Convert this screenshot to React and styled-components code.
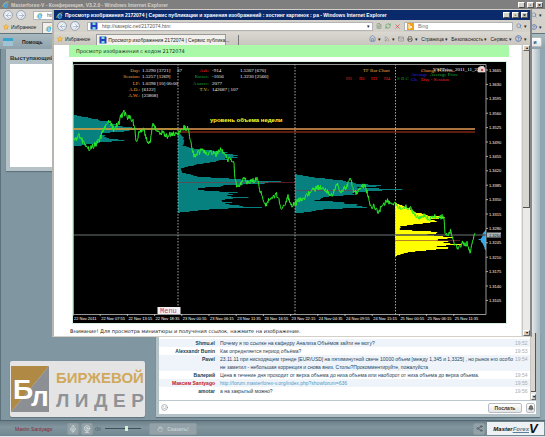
import React from "react";
import styled, { createGlobalStyle } from "styled-components";
import {
  ArrowLeft, ArrowRight, Star, FileText, RefreshCw, X, Search, House, Rss,
  Mail, Printer, CircleHelp, Mic, Webcam, Share2, Bell, Hand, Volume2, Smile,
} from "lucide-react";

const GlobalStyle = createGlobalStyle`
  * { box-sizing: border-box; }
  body { margin: 0; font-family: "Liberation Sans", Arial, sans-serif; font-size: 5px; line-height: 8px; }
  button, input { font: inherit; color: inherit; padding: 0; margin: 0; border: 0; background: none; }
  a { text-decoration: none; }
  svg { flex: none; }
`;

/* ---------- browser chrome ---------- */

const Desktop = styled.div`
  position: relative;
  display: flex;
  flex-direction: column;
  min-height: 100vh;
  overflow: hidden;
  background: #7a929c;
`;

const TitleBar = styled.div`
  display: flex;
  align-items: center;
  gap: 2px;
  height: ${(p) => (p.$active ? 10 : 9)}px;
  padding: 0 2px;
  background: ${(p) => (p.$active ? "#0b2a6b" : "#7f7f7f")};
  color: ${(p) => (p.$active ? "#fff" : "#d4d0c8")};
  font-weight: bold;
  white-space: nowrap;

  h1 {
    flex: 1;
    margin: 0;
    overflow: hidden;
    font-size: 5px;
    font-weight: bold;
  }
`;

const WinButton = styled.button`
  width: 7px;
  height: 6px;
  border: 1px solid;
  border-color: #fff #555 #555 #fff;
  background: #d4d0c8;
  color: #000;
  line-height: 4px;
  font-weight: bold;
`;

const Toolbar = styled.div`
  display: flex;
  align-items: center;
  gap: 3px;
  height: ${(p) => (p.$tall ? 13 : 12)}px;
  padding: 0 3px;
  background: ${(p) => (p.$tall ? "linear-gradient(#dbd8d2, #c9c6bf)" : "#d4d1ca")};
  color: #222;
  white-space: nowrap;
`;

const RoundButton = styled.button`
  display: grid;
  place-items: center;
  width: 10px;
  height: 10px;
  border: 1px solid #9aa7b8;
  border-radius: 50%;
  background: radial-gradient(#fff, #ccd6e2);
  color: #8496ad;
`;

const Address = styled.div`
  display: flex;
  flex: 1;
  align-items: center;
  gap: 4px;
  height: 9px;
  margin-left: 4px;
  padding: 0 2px;
  border: 1px solid #b4b4b4;
  background: #fff;
`;

const SearchBox = styled(Address)`
  flex: 0 0 109px;
  margin-left: 0;
`;

const Field = styled.input`
  flex: 1;
  min-width: 0;
  height: 7px;
  outline: none;
  color: #555;
`;

const ToolButton = styled.button`
  display: flex;
  align-items: center;
  gap: 2px;
  color: #222;
`;

const Tab = styled.button`
  display: flex;
  align-items: center;
  align-self: flex-end;
  gap: 1px;
  width: 130px;
  height: 11px;
  margin-left: 3px;
  padding: 0 2px;
  border: 1px solid #999;
  border-bottom: 0;
  background: #f1f0ed;
`;

const SmallTab = styled.button`
  align-self: flex-end;
  width: 10px;
  height: 10px;
  border-right: 1px solid #777;
`;

const Spacer = styled.div`
  flex: 1;
`;

/* ---------- conference page ---------- */

const AppHeader = styled.header`
  display: flex;
  align-items: center;
  justify-content: space-between;
  gap: 10px;
  height: 16px;
  padding: 0 3px;
  border-top: 1px solid #65747b;
  background: linear-gradient(#a9b9c0, #8fa2ab);
  color: #203039;
  font-weight: bold;
`;

const HeaderGroup = styled.div`
  display: flex;
  align-items: center;
  gap: 9px;
`;

const Brand = styled.div`
  width: 10px;
  border-top: 3px dashed #3aa3cc;
  border-bottom: 5px solid #9fc3d3;
`;

const Stage = styled.main`
  display: grid;
  flex: 1;
  grid-template-columns: 140px 1fr;
  grid-template-rows: 1fr auto;
  column-gap: 10px;
  padding: 0 5px 3px;
  border-left: 1px solid #5d717b;
  background: linear-gradient(90deg, #8097a2, #7e96a1 90%, #91a7b2);
`;

const Speakers = styled.section`
  align-self: start;
  padding: 4px;
  background: #b4c1c7;
  box-shadow: 0 1px 1px #60747e;

  h2 {
    margin: 0;
    font-size: 6px;
    line-height: 11px;
    color: #26363e;
  }
`;

const SpeakerList = styled.div`
  height: 103px;
  background: #fff;
`;

const Board = styled.section`
  background: linear-gradient(90deg, #d5dadd 95%, #e2e6e8 98%, #a8bac3);
`;

const Sponsor = styled.a`
  display: flex;
  align-self: end;
  gap: 7px;
  height: 56px;
  margin: 0 5px 0 4px;
  padding: 5px 1px;
  width: 135px;
  border-radius: 2px;
  background: #e4e4e5;
  box-shadow: 0 1px 1px #60747e;
`;

const SponsorWords = styled.div`
  flex: 1;
  font-weight: bold;
`;

const SponsorLine = styled.div`
  display: flex;
  justify-content: space-between;
  color: ${(p) => p.$color};
  font-size: ${(p) => p.$size}px;
  line-height: 23px;
`;

const Chat = styled.section`
  height: 84px;
  padding: 0 4px 3px 3px;
  display: flex;
  flex-direction: column;
  background: #b4c1c7;
  box-shadow: 0 1px 1px #60747e;
`;

const Log = styled.div`
  display: flex;
  flex: 1;
  min-height: 0;
  background: #fff;
`;

const Messages = styled.table`
  flex: 1;
  align-self: flex-end;
  margin-bottom: 5px;
  table-layout: fixed;
  border-collapse: collapse;
  color: #25435a;

  td, th { padding: 0; line-height: 8px; vertical-align: top; }
  th {
    width: 61px;
    padding-right: 5px;
    text-align: right;
  }
  td:last-child { width: 15px; color: #a7adb0; }
  a { color: #4a9cc9; }
`;

const MessageRow = styled.tr`
  background: ${(p) => (p.$shade ? "#eef4fa" : "#fff")};
  th { color: ${(p) => (p.$own ? "#c0142c" : "#1c4050")}; }
`;

const ScrollBar = styled.div`
  display: flex;
  flex-direction: column;
  justify-content: space-between;
  width: ${(p) => p.$width}px;
  background: #eceae6;
  border-left: 1px solid #c8c6c2;
`;

const ScrollButton = styled.button`
  width: 100%;
  height: 6px;
  border: 1px solid;
  border-color: #fff #666 #666 #fff;
  background: #d4d0c8;
  color: #000;
  font-size: 4px;
  line-height: 4px;
`;

const Thumb = styled.div`
  flex: 0 0 ${(p) => p.$size};
  margin-bottom: auto;
  border-right: 1px solid #555;
  border-bottom: 1px solid #555;
  background: #d9d6d0;
`;

const Composer = styled.form`
  display: flex;
  align-items: center;
  gap: 4px;
  height: 14px;
  padding: 0 1px 0 2px;
  border-top: 1px solid #bcc8ce;
  background: #fff;
  color: #7a8890;
`;

const PanelButton = styled.button`
  display: flex;
  align-items: center;
  justify-content: center;
  gap: 4px;
  width: ${(p) => p.$width}px;
  height: ${(p) => (p.$dark ? 12 : 10)}px;
  border: 1px solid ${(p) => (p.$dark ? "#8b999f" : "#b9bdc0")};
  border-radius: 2px;
  background: ${(p) => (p.$dark ? "#93a2a8" : "linear-gradient(#fff, #e3e5e6)")};
  color: ${(p) => (p.$dark ? "#c4ced2" : "#333")};
  font-weight: bold;
`;

const Footer = styled.footer`
  display: flex;
  align-items: center;
  gap: 2px;
  height: 17px;
  padding: 0 1px 0 15px;
  border-top: 1px solid #53656f;
  border-bottom: 1px solid #dfe5e8;
  background: linear-gradient(#6b7f89, #8296a0 40%, #71868f);
`;

const UserName = styled.span`
  width: 50px;
  color: #8c2433;
`;

const Volume = styled.input`
  width: 36px;
  height: 6px;
  margin: 0 6px 0 2px;
  appearance: none;

  &::-webkit-slider-runnable-track { height: 1px; background: #3f5059; }
  &::-webkit-slider-thumb {
    appearance: none;
    width: 3px;
    height: 5px;
    margin-top: -2px;
    background: #d3f0d4;
  }
`;

const Product = styled.a`
  display: flex;
  align-items: center;
  justify-content: center;
  width: 57px;
  height: 13px;
  background: #eef1f3;
  color: #111;
  font-size: 6px;
  font-style: italic;
  font-weight: bold;

  span { color: #58809a; text-decoration: underline; }
  strong { font-size: 13px; line-height: 13px; }
`;

/* ---------- picture window ---------- */

const Popup = styled.section`
  position: absolute;
  top: 9px;
  left: 52px;
  right: 13px;
  border: 1px solid #d4d0c8;
  border-right: 2px solid #85878a;
  border-left: 2px solid #b8b6b0;
  background: #fff;
`;

const Viewport = styled.div`
  display: flex;
`;

const Page = styled.div`
  flex: 1;
  min-width: 0;
  padding: 0 12px 0 15px;
  border-right: 1px solid #dceee8;
`;

const PageTitle = styled.h2`
  margin: 0 0 5px;
  padding-left: 7px;
  background: #a9f9a9;
  color: #17301a;
  font: 5px/12px "DejaVu Sans", sans-serif;
`;

const PictureLink = styled.a`
  display: block;
  margin: 0 3px 0 4px;
  outline: 1px solid #d8f0e0;
`;

const Chart = styled.svg`
  display: block;
  width: 100%;
  height: auto;
  background: #000;
  font-family: "Liberation Sans", sans-serif;
  font-size: 4px;

  .serif { font-family: "Liberation Serif", serif; font-size: 5px; }
`;

const Notice = styled.p`
  margin: 4px 0 0 1px;
  color: #222;
  font: 5px/9px "DejaVu Sans", sans-serif;
`;

/* anchors of the price line, x then y */
const price = [
  [73, 140], [76, 139], [79, 136], [82, 140], [85, 146], [88, 149], [92, 147], [96, 144], [100, 139],
  [103, 131], [106, 126], [109, 120], [111, 125], [114, 130], [117, 125], [119, 122], [121, 116],
  [124, 113], [127, 117], [130, 116], [133, 122], [135, 128], [136, 143], [139, 133], [143, 129],
  [146, 137], [149, 143], [151, 138], [153, 122], [155, 127], [158, 132], [163, 133], [167, 136],
  [172, 134], [177, 134], [180, 130], [184, 128], [188, 129], [190, 139], [193, 153], [195, 156],
  [199, 152], [203, 150], [206, 153], [211, 152], [216, 154], [220, 150], [224, 153], [228, 160],
  [230, 156], [234, 164], [235, 178], [237, 187], [241, 184], [244, 178], [248, 183], [253, 181],
  [257, 178], [260, 192], [263, 197], [266, 206], [269, 200], [273, 198], [276, 194], [279, 200],
  [281, 211], [284, 206], [288, 196], [291, 205], [294, 205], [299, 200], [305, 197], [311, 191],
  [317, 188], [322, 187], [327, 192], [332, 195], [337, 183], [341, 192], [347, 186], [350, 177],
  [354, 192], [358, 193], [361, 186], [365, 186], [368, 195], [371, 207], [374, 206], [378, 211],
  [382, 208], [387, 200], [392, 206], [396, 203], [400, 209], [405, 207], [411, 209], [415, 215],
  [420, 217], [425, 216], [430, 219], [434, 217], [440, 217], [444, 217], [445, 231], [448, 236],
  [451, 231], [454, 242], [458, 250], [462, 243], [467, 244], [470, 252], [472, 242], [475, 231],
];

/* volume profiles: rows of [y, length] */
const profiles = [
  { x: 73, color: "#078080", rows: [[115, 4], [118, 20], [121, 34], [124, 40], [126, 50], [128, 66], [130, 58], [132, 36], [134, 26], [136, 32], [139, 42], [140, 48], [142, 28], [145, 8]] },
  { x: 178, color: "#078080", rows: [[133, 2], [138, 6], [145, 5], [148, 15], [151, 42], [156, 58], [160, 40], [163, 24], [166, 10], [168, 3], [172, 4], [176, 20], [179, 60], [181, 106], [183, 80], [185, 50], [188, 20], [190, 24], [192, 54], [195, 48], [197, 64], [200, 40], [204, 58], [207, 78], [209, 28], [212, 2]] },
  { x: 295, color: "#078080", rows: [[174, 2], [177, 18], [179, 38], [182, 56], [185, 82], [187, 70], [189, 98], [191, 66], [194, 54], [197, 28], [200, 20], [202, 48], [205, 60], [207, 72], [209, 30], [212, 8]] },
  { x: 395, color: "#ffff00", rows: [[203, 2], [207, 12], [212, 22], [214, 30], [217, 46], [219, 38], [221, 42], [223, 28], [226, 6], [229, 5], [232, 46], [234, 30], [237, 52], [239, 42], [242, 54], [244, 62], [246, 46], [248, 54], [250, 30], [252, 12], [255, 2]] },
  { x: 486, color: "#38a8e8", dir: -1, rows: [[230, 1], [233, 3], [237, 4], [239, 7], [242, 4], [246, 2], [249, 1]] },
];

const noise = (n) => {
  const v = Math.sin(n * 12.9898) * 43758.5453;
  return (v - Math.floor(v)) * 2 - 1;
};

const between = (list, at) => {
  const i = Math.max(1, list.findIndex((p) => p[0] >= at));
  const [a, b] = [list[i - 1], list[i]];
  return a[1] + ((b[1] - a[1]) * (at - a[0])) / (b[0] - a[0]);
};

const pricePoints = () => {
  const out = [];
  for (let x = 73; x <= 475; x += 0.5) {
    out.push(`${x},${(between(price, x) + noise(x) * 2.8).toFixed(1)}`);
  }
  return out.join(" ");
};

const profilePath = ({ x, rows, dir = 1 }) => {
  const first = rows[0][0];
  const last = rows[rows.length - 1][0];
  let d = `M${x} ${first}`;
  for (let y = first; y <= last; y++) {
    const len = between(rows, y) * (1 + noise(y + x) * 0.12);
    d += `H${(x + dir * len).toFixed(1)}V${y + 1}`;
  }
  return `${d}H${x}Z`;
};

const prices = Array.from({ length: 17 }, (_, i) => (1.3665 - i * 0.0035).toFixed(4));

const times = [
  "22 Nov 2011", "22 Nov 07:55", "22 Nov 13:15", "22 Nov 18:35", "23 Nov 00:55",
  "23 Nov 06:15", "23 Nov 11:35", "23 Nov 16:55", "23 Nov 22:15", "24 Nov 04:35",
  "24 Nov 09:55", "24 Nov 15:15", "25 Nov 00:55", "25 Nov 06:15", "25 Nov 11:35",
];

const stats = [
  ["Day:", "1.5290 [3721]"],
  ["Session:", "1.5257 [1269]"],
  ["LP:", "1.0398 [10] 00:00"],
  ["A.D.:", "[6122]"],
  ["A.W.:", "[23808]"],
];

const deltas = [
  ["Ask:", "-914", "#ff2020", "1.5307 [670]"],
  ["Канал:", "-1056", "#189838", "1.3230 [2566]"],
  ["Азиатс:", "2077", "#189838", ""],
  ["T.V.:", "142687 | 107", "#f0c838", ""],
];

const ForexChart = () => (
  <Chart viewBox="73 62 433 261" role="img" aria-label="уровень объема недели">
    {profiles.map((p) => (
      <path key={p.x} d={profilePath(p)} fill={p.color} />
    ))}
    <path d="M178 182.500H295M295 190.500H360M395 240.500H460" stroke="#8c3040" strokeWidth="0.6" />
    <path d="M73 235H486" stroke="#4a4e4e" strokeWidth="1.300" />
    <path d="M73 129H475" stroke="#e39a55" strokeWidth="1.400" />
    <path d="M73 129H178" stroke="#b8a032" strokeWidth="1" />
    <path d="M178 132H475" stroke="#7d2612" strokeWidth="1.400" />
    <path d="M178 64V314M295 64V314M395.500 64V314" stroke="#b8b8b8" strokeWidth="0.9" strokeDasharray="1.500 1.500" />
    <polyline points={pricePoints()} fill="none" stroke="#28ee28" strokeWidth="1" />
    <path d="M73.500 64.500H486V314.500H73.500Z" fill="none" stroke="#a8a8a8" strokeWidth="0.9" />

    {prices.map((label, i) => (
      <g key={label}>
        <path d={`M486 ${70 + i * 14.4}h2`} stroke="#ccc" strokeWidth="0.8" />
        <text x="489" y={71.5 + i * 14.4} fill="#fff">{label}</text>
      </g>
    ))}
    <rect x="487" y="232.500" width="14" height="5" fill="#aeb4b4" />
    <text x="489" y="236.500" fill="#111">1.3264</text>
    {times.map((label, i) => (
      <g key={label}>
        <path d={`M${73 + i * 27.2} 314v2`} stroke="#ccc" strokeWidth="0.8" />
        <text x={74 + i * 27.2} y="320" fill="#fff">{label}</text>
      </g>
    ))}

    <g className="serif">
      {stats.map(([name, value], i) => (
        <g key={name}>
          <text x="140" y={72 + i * 6.3} textAnchor="end" fill="#ffa040">{name}</text>
          <text x="142" y={72 + i * 6.3} fill="#eee">{value}</text>
        </g>
      ))}
      <text x="177" y="72" fill="#eee">37</text>
      {deltas.map(([name, value, color, extra], i) => (
        <g key={name}>
          <text x="209" y={72 + i * 6.3} textAnchor="end" fill={color}>{name}</text>
          <text x="212" y={72 + i * 6.3} fill="#eee">{value}</text>
          <text x="240" y={72 + i * 6.3} fill="#eee">{extra}</text>
        </g>
      ))}
      <text x="363" y="72" fill="#ffa040">TF Bar Chart</text>
      <g fill="#ff2020">
        <text x="346" y="80">H1</text>
        <text x="359" y="80">ID</text>
        <text x="371" y="80">H3</text>
        <text x="384" y="80">H4</text>
      </g>
      <text x="397" y="80" fill="#189838">S B C</text>
      <text x="411" y="76" fill="#2828e8">Average</text>
      <text x="411" y="81" fill="#2828e8">Ch.</text>
      <text x="430" y="76" fill="#18a838">Average Price</text>
      <text x="421" y="81" fill="#ff2020">Day - Session</text>
      <text x="421" y="72" fill="#ffa040">Change Percent</text>
      <text x="433" y="71" fill="#fff">VSPPrice_2011_11_22</text>
    </g>
    <path d="M479 67h5l1 2v3h-7v-3zM480 66l2 1 2-1" fill="#e8c8c8" stroke="#eee" strokeWidth="0.6" />
    <circle cx="482" cy="70" r="1" fill="#b02020" />

    <text x="210" y="122" fill="#ffff28" fontSize="6" fontWeight="bold">уровень объема недели</text>
    <rect x="157.500" y="307" width="23" height="7" fill="#f4f0f2" />
    <text x="160" y="313" fill="#b84878" fontSize="7" fontFamily="Liberation Mono, monospace">Menu</text>
  </Chart>
);

const WindowButtons = () => (
  <>
    <WinButton aria-label="Свернуть">_</WinButton>
    <WinButton aria-label="Развернуть">▫</WinButton>
    <WinButton aria-label="Закрыть">×</WinButton>
  </>
);

const IeMark = () => (
  <svg width="7" height="7" viewBox="0 0 14 14" fill="none">
    <path d="M11.500 8H4a3.500 3.500 0 0 0 7 1.500M4 7a3.500 3.500 0 0 1 7.500 1" stroke="#3fb0ef" strokeWidth="2.200" />
    <path d="M2 12C0 9 7 1 13 2" stroke="#f2c53c" strokeWidth="1.300" />
  </svg>
);

const SiteMark = () => (
  <svg width="8" height="8" viewBox="0 0 16 16">
    <path d="M1 1h13l1 2v12H1z" fill="#2440c0" />
    <path d="M5 1h6v5H5zM5 10h6v5H5z" fill="#7fe0d0" />
  </svg>
);

const Navigation = () => (
  <>
    <RoundButton aria-label="Назад"><ArrowLeft size={7} /></RoundButton>
    <RoundButton aria-label="Вперед"><ArrowRight size={7} /></RoundButton>
  </>
);

const Favorites = () => (
  <ToolButton><Star size={6} color="#e0912a" fill="#f7c948" /> Избранное</ToolButton>
);

const SponsorMark = () => (
  <svg width="38" height="46" viewBox="0 0 38 46">
    <path d="M0 0H38L0 46Z" fill="#b08a45" />
    <path d="M38 0V46H0Z" fill="#8c8f94" />
    <g fill="#fff" fontWeight="bold">
      <text x="2" y="33" fontSize="28">Б</text>
      <text x="20" y="40" fontSize="28">л</text>
    </g>
  </svg>
);

const messages = [
  { name: "Shmu.el", text: "Почему я по ссылке на кафедру Анализа Объёмов зайти не могу?", time: "19:52", shade: true },
  { name: "Alexxandr Bunin", text: "Как определяется период объёма?", time: "19:53" },
  { name: "Pavel", text: "23.11.11 при нисходящем тренде [EUR/USD] на пятиминутной свече 10000 объем [между 1,345 и 1,3325] , но рынок его особо не заметил - небольшая коррекция и снова вниз. Столы?Прокомментируйте, пожалуйста", time: "19:54", shade: true },
  { name: "Валерий", text: "Цена в течение дня проходит от верха объема до низа объема или наоборот от низа объема до верха объема.", time: "19:54" },
  { name: "Максим Santyago", link: "http://forum.masterforex-v.org/index.php?showforum=636", time: "19:55", shade: true, own: true },
  { name: "amotar", text: "а на закрытый можно?", time: "19:56" },
];

const App = () => {
  return (
    <>
      <GlobalStyle />
      <Desktop>
        <TitleBar>
          <IeMark />
          <h1>Masterforex-V - Конференция, V3.2.0 - Windows Internet Explorer</h1>
          <WindowButtons />
        </TitleBar>
        <Toolbar>
          <Navigation />
          <Address>
            <IeMark />
            <Field aria-label="Адрес" defaultValue="http://" />
          </Address>
          <ToolButton aria-label="Поиск"><Search size={6} color="#4574b5" /> ▾</ToolButton>
        </Toolbar>
        <Toolbar>
          <Favorites />
          <Tab><IeMark /> Конференция</Tab>
          <Spacer />
          <ToolButton aria-label="Справка"><CircleHelp size={6} color="#2650a8" /> ▾</ToolButton>
        </Toolbar>

        <AppHeader>
          <HeaderGroup>
            <Brand />
            <ToolButton>Помощь</ToolButton>
          </HeaderGroup>
          <PanelButton $width={14}>и</PanelButton>
        </AppHeader>

        <Stage>
          <Speakers>
            <h2>Выступающий</h2>
            <SpeakerList />
          </Speakers>
          <Board />
          <Sponsor href="#leader">
            <SponsorMark />
            <SponsorWords>
              <SponsorLine $color="#d0a95c" $size={15}>БИРЖЕВОЙ</SponsorLine>
              <SponsorLine $color="#8f9297" $size={19}>
                {"ЛИДЕР".split("").map((c) => <span key={c}>{c}</span>)}
              </SponsorLine>
            </SponsorWords>
          </Sponsor>
          <Chat>
            <Log>
              <Messages>
                <tbody>
                  {messages.map((m) => (
                    <MessageRow key={m.name} $shade={m.shade} $own={m.own}>
                      <th scope="row">{m.name}</th>
                      <td>{m.link ? <a href={m.link}>{m.link}</a> : m.text}</td>
                      <td>{m.time}</td>
                    </MessageRow>
                  ))}
                </tbody>
              </Messages>
              <ScrollBar $width={6}>
                <Thumb $size="88%" />
                <ScrollButton aria-label="Вниз">▾</ScrollButton>
              </ScrollBar>
            </Log>
            <Composer>
              <Smile size={7} />
              <Field aria-label="Сообщение" />
              <PanelButton type="button" $width={34}>Послать</PanelButton>
              <PanelButton type="button" $width={9} aria-label="Звук"><Bell size={6} fill="#777" /></PanelButton>
            </Composer>
          </Chat>
        </Stage>

        <Footer>
          <UserName>Maxim Santyago</UserName>
          <PanelButton $dark $width={12} aria-label="Микрофон"><Mic size={8} color="#e4eaec" /></PanelButton>
          <PanelButton $dark $width={12} aria-label="Камера"><Webcam size={8} color="#e4eaec" /></PanelButton>
          <Volume2 size={6} color="#4c5c64" />
          <Volume type="range" aria-label="Громкость" defaultValue="62" />
          <PanelButton $dark $width={48}><Hand size={6} /> Сказать!</PanelButton>
          <Spacer />
          <PanelButton $dark $width={12} aria-label="Поделиться"><Share2 size={7} color="#3d4d55" /></PanelButton>
          <Product href="#masterforex">Master<span>Forex</span><strong>V</strong></Product>
        </Footer>

        <Popup>
          <TitleBar $active>
            <IeMark />
            <h1>Просмотр изображения 2172074 | Сервис публикации и хранения изображений : хостинг картинок : ра - Windows Internet Explorer</h1>
            <WindowButtons />
          </TitleBar>
          <Toolbar>
            <Navigation />
            <Address>
              <SiteMark />
              <Field aria-label="Адрес страницы" defaultValue="http://savepic.net/2172074.htm" />
              ▾
            </Address>
            <ToolButton aria-label="Страница совместимости"><FileText size={6} color="#6b8a6b" /></ToolButton>
            <ToolButton aria-label="Обновить"><RefreshCw size={6} color="#2f9a3c" /></ToolButton>
            <ToolButton aria-label="Остановить"><X size={7} color="#c23a2b" /></ToolButton>
            <SearchBox>
              <svg width="7" height="7" viewBox="0 0 14 14">
                <path d="M0 0h14v14H0z" fill="#f0a020" />
                <path d="M4 2v9l6-3-4-2" fill="none" stroke="#fff" strokeWidth="2" />
              </svg>
              <Field aria-label="Поиск Bing" placeholder="Bing" />
            </SearchBox>
            <ToolButton aria-label="Найти"><Search size={6} color="#4574b5" /> ▾</ToolButton>
          </Toolbar>
          <Toolbar $tall>
            <Favorites />
            <Tab><SiteMark /> Просмотр изображения 2172074 | Сервис публика...</Tab>
            <SmallTab aria-label="Новая вкладка" />
            <Spacer />
            <ToolButton aria-label="Домой"><House size={7} color="#4574b5" /> ▾</ToolButton>
            <ToolButton aria-label="Каналы"><Rss size={6} color="#777" /> ▾</ToolButton>
            <ToolButton aria-label="Почта"><Mail size={6} color="#777" /></ToolButton>
            <ToolButton aria-label="Печать"><Printer size={6} color="#444" /> ▾</ToolButton>
            <ToolButton>Страница ▾</ToolButton>
            <ToolButton>Безопасность ▾</ToolButton>
            <ToolButton>Сервис ▾</ToolButton>
            <ToolButton aria-label="Помощь"><CircleHelp size={7} color="#2650a8" /> ▾</ToolButton>
          </Toolbar>
          <Viewport>
            <Page>
              <PageTitle>Просмотр изображения с кодом 2172074</PageTitle>
              <PictureLink href="#full"><ForexChart /></PictureLink>
              <Notice>Внимание! Для просмотра миниатюры и получения ссылок, нажмите на изображение.</Notice>
            </Page>
            <ScrollBar $width={8}>
              <ScrollButton aria-label="Вверх">▴</ScrollButton>
              <Thumb $size="54%" />
              <ScrollButton aria-label="Прокрутить вниз">▾</ScrollButton>
            </ScrollBar>
          </Viewport>
        </Popup>
      </Desktop>
    </>
  );
};

export default App;
